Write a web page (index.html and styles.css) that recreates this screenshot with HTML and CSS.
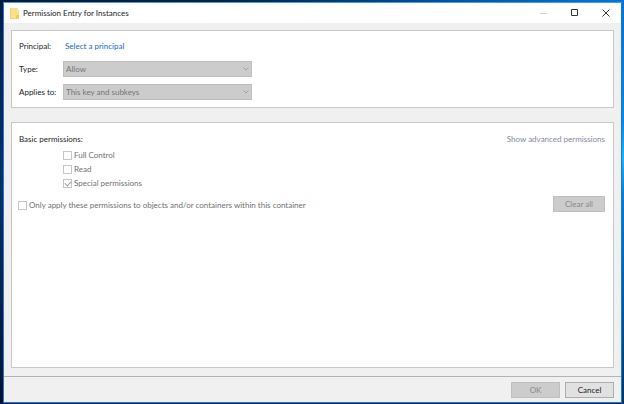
FILE: index.html
```html
<!DOCTYPE html>
<html lang="en">
<head>
<meta charset="utf-8">
<title>Permission Entry for Instances</title>
<link rel="stylesheet" href="styles.css">
</head>
<body>
<div class="window">
  <header class="titlebar">
    <svg class="folder" viewBox="0 0 9 11" aria-hidden="true">
      <path d="M0 0h8v2h1v9H0z" fill="#fbe08c"/>
      <path d="M0 0h1v11H0zM0 10h6v1H0z" fill="#f6d26e"/>
      <path d="M6 7h3v4H6z" fill="#f3cb5e"/>
    </svg>
    <h1 class="title">Permission Entry for Instances</h1>
    <div class="controls">
      <button class="control" aria-label="Minimize" disabled><svg viewBox="0 0 8 8"><path d="M0 4.500h7" stroke="#d2d2d2"/></svg></button>
      <button class="control" aria-label="Maximize"><svg viewBox="0 0 8 8"><path d="M.5.5h6v6h-6z" fill="none" stroke="#333"/></svg></button>
      <button class="control" aria-label="Close"><svg viewBox="0 0 8 8"><path d="M.5.5l7 7M7.500.5l-7 7" stroke="#333"/></svg></button>
    </div>
  </header>
  <main class="content">
    <section class="panel entry">
      <span>Principal:</span>
      <a class="principal" href="#">Select a principal</a>
      <label for="type">Type:</label>
      <div class="dropdown">
        <select id="type" disabled><option>Allow</option></select>
        <svg class="chevron" viewBox="0 0 6 4" aria-hidden="true"><path d="M.5.5L3 3 5.500.5"/></svg>
      </div>
      <label for="scope">Applies to:</label>
      <div class="dropdown">
        <select id="scope" disabled><option>This key and subkeys</option></select>
        <svg class="chevron" viewBox="0 0 6 4" aria-hidden="true"><path d="M.5.5L3 3 5.500.5"/></svg>
      </div>
    </section>
    <section class="panel permissions">
      <div class="heading">
        <h2>Basic permissions:</h2>
        <a class="advanced" href="#">Show advanced permissions</a>
      </div>
      <div class="list">
        <label class="check"><input type="checkbox" disabled>Full Control</label>
        <label class="check"><input type="checkbox" disabled>Read</label>
        <label class="check"><input type="checkbox" checked disabled>Special permissions</label>
      </div>
      <div class="bottom">
        <label class="check"><input type="checkbox" disabled>Only apply these permissions to objects and/or containers within this container</label>
        <button class="button clear" disabled>Clear all</button>
      </div>
    </section>
  </main>
  <footer class="footer">
    <button class="button" disabled>OK</button>
    <button class="button">Cancel</button>
  </footer>
</div>
</body>
</html>
```
FILE: styles.css
```css
* {
  box-sizing: border-box;
}

body {
  margin: 0;
  height: 100vh;
  padding: 2px 2px 1px 3px;
  display: flex;
  font: 8px/14px Lato, "Noto Sans", sans-serif;
  color: #1c1c1c;
  background:
    linear-gradient(#0072d8, #0088f4 30%, #14b4ff 39%, #0080e0 48%, #0058a8 75%, #003468) right / 3px 100% no-repeat,
    linear-gradient(90deg, #001a3c, #002348 35%, #004a94 65%, #0078dc) top / 100% 3px no-repeat,
    linear-gradient(#001c44, #003068 45%, #001230) left / 4px 100% no-repeat,
    #002656;
}

button,
select,
input {
  font: inherit;
  margin: 0;
}

h1,
h2 {
  margin: 0;
  font: inherit;
}

.window {
  flex: 1;
  display: flex;
  flex-direction: column;
  border: 1px solid #1c78cc;
  border-top-color: #4a9ce0;
  background: #f0f0f0;
}

.titlebar {
  display: flex;
  align-items: center;
  height: 20px;
  padding-left: 6px;
  background: #fff;
}

.folder {
  width: 9px;
  height: 11px;
  margin-right: 4px;
}

.title {
  flex: 1;
}

.controls {
  display: flex;
}

.control {
  display: flex;
  align-items: center;
  justify-content: center;
  width: 31px;
  height: 20px;
  padding: 0;
  border: 0;
  background: none;
}

.control svg {
  width: 8px;
  height: 8px;
}

.content {
  flex: 1;
  display: flex;
  flex-direction: column;
  gap: 14px;
  padding: 7px 7px 8px;
}

.panel {
  background: #fff;
  border: 1px solid #c8c8c8;
}

.entry {
  display: grid;
  grid-template-columns: 44px minmax(0, 189px);
  grid-auto-rows: 16px;
  row-gap: 7px;
  align-items: center;
  padding: 7px;
}

.principal {
  padding-left: 2px;
  color: #1468cc;
  text-decoration: none;
}

.dropdown {
  position: relative;
}

.dropdown select {
  display: block;
  appearance: none;
  width: 100%;
  height: 16px;
  padding: 0 2px;
  border: 1px solid #bfbfbf;
  border-radius: 0;
  background: #ccc;
  color: #757575;
  opacity: 1;
}

.chevron {
  position: absolute;
  right: 3px;
  top: 6px;
  width: 6px;
  height: 4px;
  fill: none;
  stroke: #a2a2a2;
}

.permissions {
  flex: 1;
  padding: 9px 8px 8px 6px;
}

.heading {
  display: flex;
  justify-content: space-between;
  padding-left: 1px;
}

.advanced {
  color: #8587a0;
  text-decoration: none;
}

.list {
  display: flex;
  flex-direction: column;
  padding: 2px 0 6px 45px;
}

.check {
  display: flex;
  align-items: center;
  gap: 2px;
  color: #707070;
}

.check input {
  position: relative;
  appearance: none;
  width: 9px;
  height: 9px;
  border: 1px solid #c6c6c6;
  background: #fff;
}

.check input:checked::before {
  content: "";
  position: absolute;
  left: 1px;
  top: 1px;
  width: 5px;
  height: 3px;
  border: solid #a0a0a0;
  border-width: 0 0 1px 1px;
  transform: rotate(-45deg);
}

.bottom {
  display: flex;
  align-items: flex-end;
  justify-content: space-between;
}

.button {
  width: 49px;
  height: 16px;
  padding: 0;
  border: 1px solid #adadad;
  background: #e1e1e1;
  color: #1c1c1c;
  line-height: 14px;
}

.button:disabled {
  border-color: #bfbfbf;
  background: #ccc;
  color: #8a8a8a;
}

.clear {
  width: 52px;
}

.footer {
  display: flex;
  justify-content: flex-end;
  gap: 5px;
  padding: 5px 7px 4px;
  border-top: 1px solid #b4b4b4;
}
```
